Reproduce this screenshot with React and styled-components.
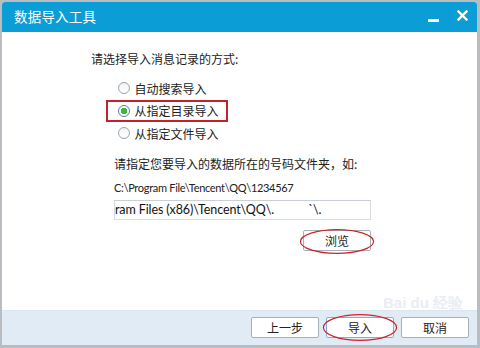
import React, { useState } from 'react'
import styled, { createGlobalStyle } from 'styled-components'

const GlobalStyle = createGlobalStyle`
  html, body {
    margin: 0;
    padding: 0;
    background: #b9bdc1;
  }
  * { box-sizing: border-box; }
`

const CJK = `"Noto Sans CJK SC", "Noto Sans", sans-serif`
const LATIN = `Lato, "Noto Sans CJK SC", sans-serif`

const options = ['自动搜索导入', '从指定目录导入', '从指定文件导入']

function App() {
  const [mode, setMode] = useState(1)

  return (
    <>
      <GlobalStyle />
      <Window>
        <TitleBar>
          <Title>数据导入工具</Title>
          <TitleButtons>
            <MinButton />
            <CloseButton>
              <svg width="11" height="11" viewBox="0 0 11 11">
                <path d="M1.5 1.5 L9.5 9.5 M9.5 1.5 L1.5 9.5" stroke="#fff" strokeWidth="2.4" strokeLinecap="square" />
              </svg>
            </CloseButton>
          </TitleButtons>
        </TitleBar>

        <Body>
          <Label>请选择导入消息记录的方式:</Label>
          <RadioList>
            {options.map((o, i) => (
              <RadioRow key={o} highlight={i === 1} onClick={() => setMode(i)}>
                <RadioDot checked={mode === i} />
                <RadioText>{o}</RadioText>
              </RadioRow>
            ))}
          </RadioList>

          <Section>
            <Label>请指定您要导入的数据所在的号码文件夹，如:</Label>
            <PathHint>C:\Program File\Tencent\QQ\1234567</PathHint>
            <PathInput>ram Files (x86)\Tencent\QQ\.&nbsp;&nbsp;&nbsp;&nbsp;&nbsp;&nbsp;&nbsp;&nbsp;&nbsp;&nbsp;&nbsp;`\.</PathInput>
            <BrowseRow>
              <Circled>
                <Button>浏览</Button>
                <Ellipse viewBox="0 0 80 28" preserveAspectRatio="none">
                  <ellipse cx="40" cy="15" rx="38.5" ry="11.5" fill="none" stroke="#c8242c" strokeWidth="1.2" />
                </Ellipse>
              </Circled>
            </BrowseRow>
          </Section>
        </Body>

        <Footer>
          <Watermark>Bai du 经验</Watermark>
          <Button>上一步</Button>
          <Circled>
            <Button active>导入</Button>
            <Ellipse viewBox="0 0 80 28" preserveAspectRatio="none">
              <ellipse cx="40" cy="14" rx="38.5" ry="12.5" fill="none" stroke="#c8242c" strokeWidth="1.2" />
            </Ellipse>
          </Circled>
          <Button>取消</Button>
        </Footer>
      </Window>
    </>
  )
}

export default App

const Window = styled.div`
  margin: 2px 3px 3px 2px;
  height: 343px;
  background: #fff;
  border-radius: 3px 3px 0 0;
  display: flex;
  flex-direction: column;
  overflow: hidden;
  font-family: ${CJK};
`

const TitleBar = styled.div`
  height: 30px;
  background: #0b9dd5;
  display: flex;
  align-items: center;
  justify-content: space-between;
  padding: 0 7px 0 12px;
`

const Title = styled.div`
  color: #fff;
  font-size: 13.5px;
  letter-spacing: 0.2px;
  margin-top: -2px;
`

const TitleButtons = styled.div`
  display: flex;
  align-items: center;
  gap: 18px;
  margin-top: -3px;
`

const MinButton = styled.div`
  width: 11px;
  height: 3px;
  background: #fff;
  margin-top: 9px;
`

const CloseButton = styled.div`
  width: 11px;
  height: 11px;
  display: flex;
  margin-right: 2px;
`

const Body = styled.div`
  flex: 1;
  padding: 19px 0 0 89px;
  display: flex;
  flex-direction: column;
`

const Label = styled.div`
  font-size: 12px;
  color: #222;
  line-height: 16px;
`

const RadioList = styled.div`
  display: flex;
  flex-direction: column;
  margin: 10px 0 0 15px;
`

const RadioRow = styled.div`
  display: flex;
  align-items: center;
  gap: 5px;
  height: 22.5px;
  width: 122px;
  padding-left: 9.5px;
  border: 2.5px solid ${p => (p.highlight ? '#c0232b' : 'transparent')};
  cursor: pointer;
`

const RadioDot = styled.span`
  width: 12px;
  height: 12px;
  border-radius: 50%;
  border: 1px solid ${p => (p.checked ? '#5d7fa0' : '#9aa3ab')};
  background: ${p => (p.checked ? 'radial-gradient(circle, #3cb83a 0 3px, #fff 3.5px)' : 'linear-gradient(#f3f3f3, #fff)')};
  flex-shrink: 0;
`

const RadioText = styled.span`
  font-size: 12px;
  color: #222;
`

const Section = styled.div`
  margin: 11px 0 0 23px;
  display: flex;
  flex-direction: column;
`

const PathHint = styled.div`
  font-family: ${LATIN};
  font-size: 11px;
  line-height: 15px;
  color: #222;
  margin-top: 8px;
  letter-spacing: -0.3px;
`

const PathInput = styled.div`
  margin-top: 5px;
  width: 257px;
  height: 20px;
  border: 1px solid #d8dde2;
  border-top-color: #c9cfd5;
  font-family: ${LATIN};
  font-size: 12.5px;
  line-height: 17px;
  color: #111;
  white-space: pre;
  overflow: hidden;
  letter-spacing: -0.1px;
`

const BrowseRow = styled.div`
  display: flex;
  justify-content: flex-end;
  width: 257px;
  margin-top: 10px;
`

const Circled = styled.div`
  position: relative;
  display: flex;
`

const Ellipse = styled.svg`
  position: absolute;
  left: -4px;
  top: -4px;
  width: calc(100% + 8px);
  height: calc(100% + 8px);
  pointer-events: none;
`

const Button = styled.button`
  width: 68px;
  height: 21px;
  padding: 0;
  border: 1px solid ${p => (p.active ? '#7fb0d4' : '#a9b0b7')};
  border-radius: 2px;
  background: #fff;
  font-family: ${CJK};
  font-size: 12px;
  color: #222;
  cursor: pointer;
`

const Footer = styled.div`
  position: relative;
  height: 35px;
  background: #e1ebf5;
  border-top: 1px solid #dde6ef;
  display: flex;
  align-items: center;
  justify-content: flex-end;
  gap: 7px;
  padding: 0 8px 2px 0;
`

const Watermark = styled.div`
  position: absolute;
  right: 14px;
  top: -17px;
  font-family: "Liberation Sans", sans-serif;
  font-size: 15px;
  line-height: 17px;
  font-weight: bold;
  color: rgba(225, 230, 236, 0.7);
  pointer-events: none;
`
